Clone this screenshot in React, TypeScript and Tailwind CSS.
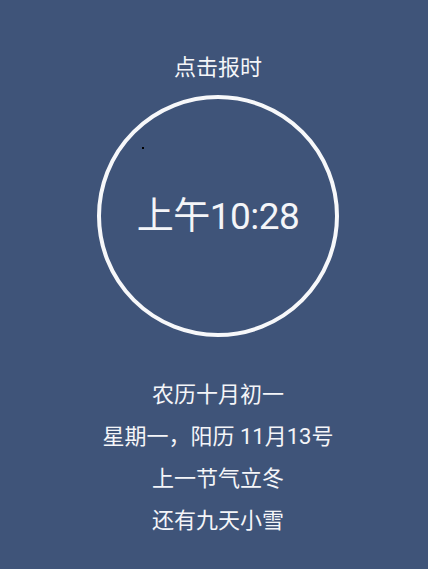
const lines = ["农历十月初一", "星期一，阳历 11月13号", "上一节气立冬", "还有九天小雪"];

export default function App() {
  return (
    <div
      className="min-h-[569px] bg-[#3f5479] text-[#f4f5f8] flex flex-col items-center pl-2 pt-[52px]"
      style={{ fontFamily: 'Roboto, "Noto Sans CJK SC", sans-serif' }}
    >
      <button className="text-[22px] leading-[32px]">点击报时</button>

      <div className="relative mt-[11px] w-[242px] h-[242px] rounded-full border-[4px] border-[#f7f8fa] flex items-center justify-center">
        <span className="absolute left-[41px] top-[48px] w-[2px] h-[2px] bg-black" />
        <span className="text-[37px] leading-none tracking-[-0.5px]">上午10:28</span>
      </div>

      <div className="mt-[37px] flex flex-col items-center">
        {lines.map((t) => (
          <div key={t} className="text-[22px] leading-[42px]">
            {t}
          </div>
        ))}
      </div>
    </div>
  );
}
